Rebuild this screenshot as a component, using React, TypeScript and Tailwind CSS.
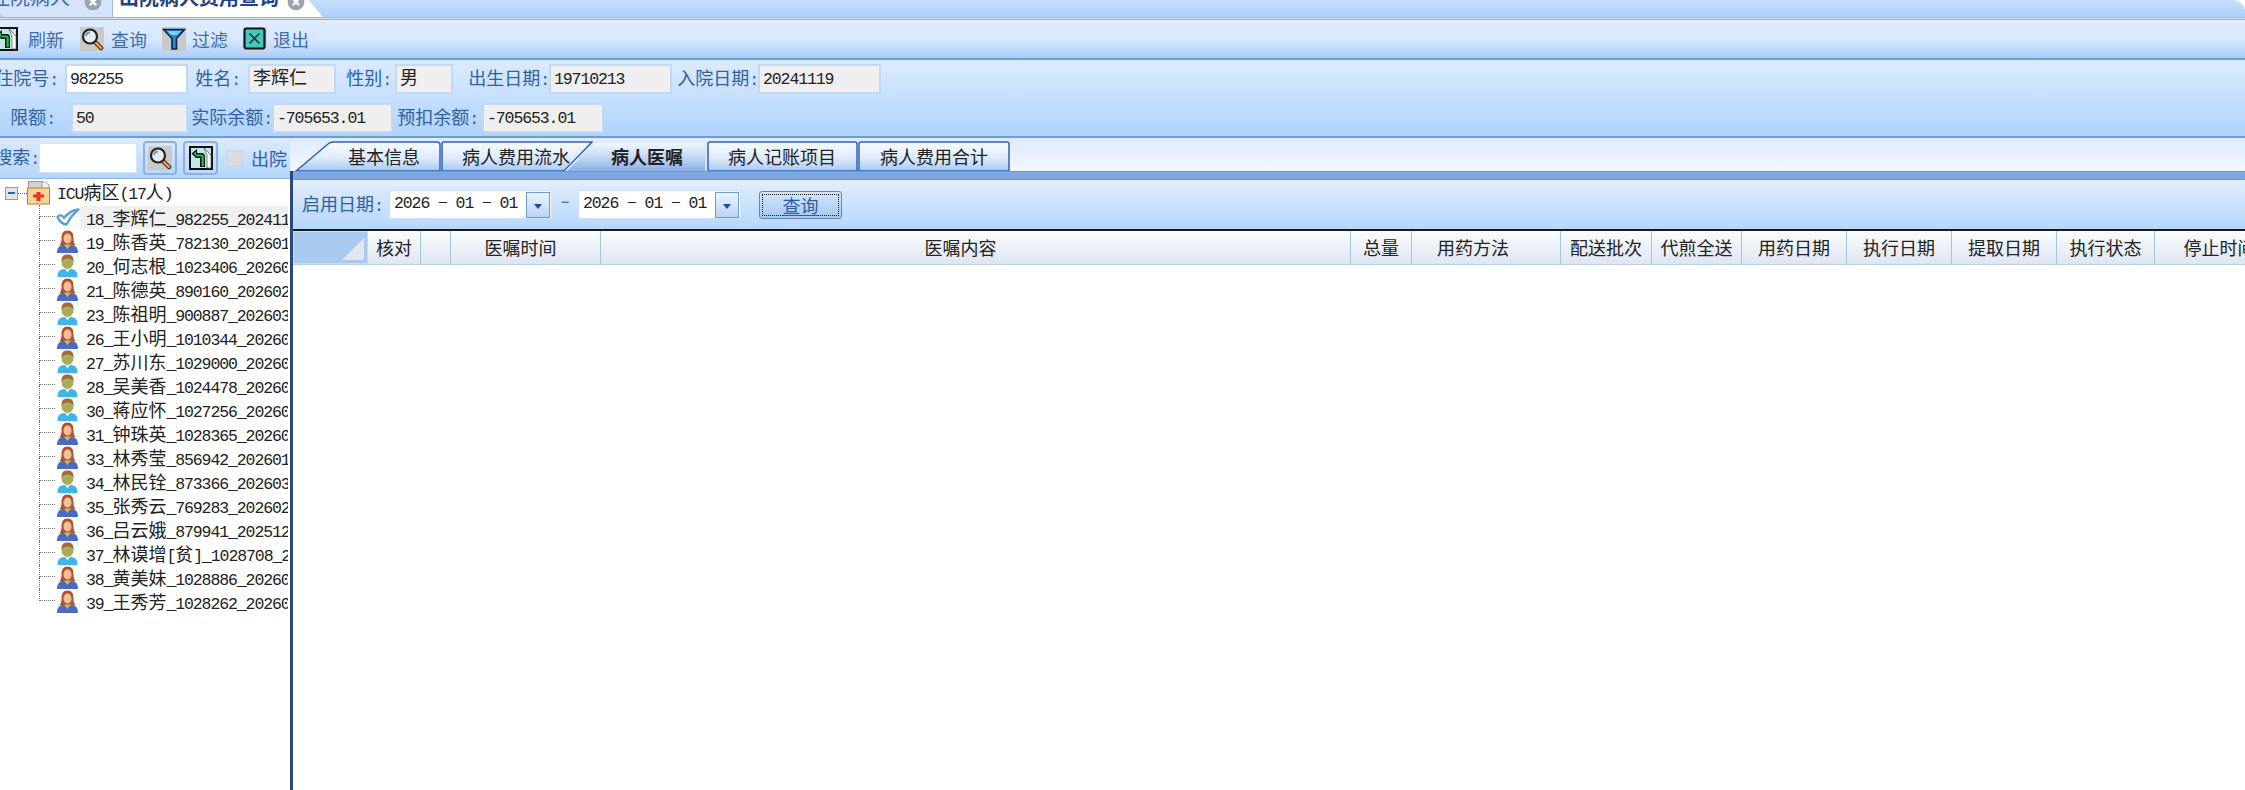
import React from 'react'

const CJK = "font-['Noto_Sans_CJK_SC','Liberation_Sans',sans-serif]"
const MONO = "font-['Liberation_Mono',monospace] text-[16.5px] tracking-[-1.1px]"

// digits and colons are narrow in the original, so they get their own mono run
const T = ({ text }: { text: string }) => {
    const parts = text.split(/([\u4e00-\u9fff]+)/)
    return (
        <>
            {parts.map((p, i) =>
                /[\u4e00-\u9fff]/.test(p)
                    ? <span key={i}>{p}</span>
                    : <span key={i} className={MONO}>{p}</span>
            )}
        </>
    )
}

const RefreshIcon = ({ size = 24 }: { size?: number }) => (
    <svg width={size} height={size} viewBox="0 0 24 24" className="shrink-0">
        <rect x="1" y="1" width="22" height="22" fill="#c4e4ea" stroke="#111" strokeWidth="2" />
        <path d="M15 2 L22 9 V22 H18 V9 Z" fill="#fff" stroke="#555" strokeWidth="0.7" />
        <path d="M11 21 V12 H7 L2.5 7.5 L8 3 V7 H13 Q16 7 16 11 V21 Z" fill="#111" />
        <path d="M12.5 20 V10.5 H7.5 L4.5 7.5 L7 5.5 V8.5 H13 Q14.8 8.5 14.8 11 V20 Z" fill="#19c24b" />
    </svg>
)

const SearchIcon = () => (
    <svg width="24" height="24" viewBox="0 0 24 24" className="shrink-0">
        <rect width="24" height="24" fill="#c9c9c9" />
        <path d="M14 14 L21 21" stroke="#4a2c10" strokeWidth="4.5" strokeLinecap="round" />
        <path d="M15 15 L21 21" stroke="#f0a048" strokeWidth="2.4" strokeLinecap="round" />
        <circle cx="10" cy="9.5" r="7" fill="#e4edf2" stroke="#222" strokeWidth="2.2" />
        <path d="M6 9 Q6.5 5.5 10 5.5" fill="none" stroke="#7f93a8" strokeWidth="2" />
    </svg>
)

const FilterIcon = () => (
    <svg width="24" height="24" viewBox="0 0 24 24" className="shrink-0">
        <rect width="24" height="24" fill="#c9c9c9" />
        <path d="M1.5 2.5 H22.5 L14.5 11.5 V22 H10 V11.5 Z" fill="#1f8fe0" stroke="#0b2344" strokeWidth="1.6" />
        <path d="M5 4 H19 L15 8 H9 Z" fill="#7fd0f7" />
    </svg>
)

const ExitIcon = () => (
    <svg width="24" height="24" viewBox="0 0 24 24" className="shrink-0">
        <rect width="24" height="24" fill="#d0d4d8" />
        <rect x="1.5" y="1.5" width="20" height="20" rx="2" fill="#46c8c0" stroke="#0c1a1c" strokeWidth="2.2" />
        <path d="M6.5 6.5 L16.5 16.5 M16.5 6.5 L6.5 16.5" stroke="#17393c" strokeWidth="1.6" />
    </svg>
)

const CloseDot = () => (
    <svg width="18" height="18" viewBox="0 0 14 14" className="shrink-0">
        <circle cx="7" cy="7" r="6.5" fill="#98a4b4" />
        <path d="M4.5 4.5 L9.5 9.5 M9.5 4.5 L4.5 9.5" stroke="#fff" strokeWidth="1.8" />
    </svg>
)

const Female = () => (
    <svg width="23" height="23" viewBox="0 0 23 23" className="shrink-0">
        <path d="M11.5 0.5 C6 0.5 5.5 5 5.5 9 C5.5 12 4.5 14 3.5 15 H19.5 C18.5 14 17.5 12 17.5 9 C17.5 5 17 0.5 11.5 0.5 Z" fill="#b5532f" />
        <path d="M1 23 C1 17 4 15 8 14.5 L15 14.5 C19 15 22 17 22 23 Z" fill="#4a6bc0" />
        <path d="M8 14.5 L11.5 19 L15 14.5 Z" fill="#e9b23c" />
        <ellipse cx="11.5" cy="8.5" rx="4" ry="5" fill="#f0c49a" />
    </svg>
)

const Male = () => (
    <svg width="23" height="23" viewBox="0 0 23 23" className="shrink-0">
        <path d="M1.5 23 C1.5 17 4 15.5 8 15 H15 C19 15.5 21.5 17 21.5 23 Z" fill="#3fb6e6" />
        <path d="M9 15 L11.5 18.5 L14 15 Z" fill="#eef6fa" />
        <ellipse cx="11.5" cy="8" rx="6" ry="7" fill="#a8ad5c" />
        <path d="M5.5 8 C5 2 8 0.5 11.5 0.5 C15 0.5 18 2 17.5 8 C16.5 5 14.5 4.5 11.5 4.5 C8.5 4.5 6.5 5 5.5 8 Z" fill="#a5683a" />
    </svg>
)

const Check = () => (
    <svg width="24" height="18" viewBox="0 0 24 18" className="shrink-0">
        <path d="M1.5 9 C3 6.5 6.5 7 8 10 C12 5 16 2 22.5 1.5 C18 5 14 10 10.5 16.5 C7 16.5 3 13 1.5 9 Z" fill="#fff" stroke="#5a9fd0" strokeWidth="2.4" strokeLinejoin="round" />
    </svg>
)

const Ward = () => (
    <svg width="23" height="24" viewBox="0 0 23 24" className="shrink-0">
        <rect x="1.5" y="0.5" width="14" height="8" fill="#cfd2d6" stroke="#9a9a9a" />
        <path d="M15 1 H19 L22 4 V8 H15 Z" fill="#eee" stroke="#aaa" />
        <rect x="0.5" y="7" width="22" height="16" fill="#fbd49a" stroke="#c07a30" />
        <path d="M9.5 11 H13.5 V13.5 H17 V16.5 H13.5 V20 H9.5 V16.5 H6 V13.5 H9.5 Z" fill="#e8351c" />
    </svg>
)

const patients: [string, 'f' | 'm' | 'c'][] = [
    ['18_李辉仁_982255_20241119', 'c'],
    ['19_陈香英_782130_20260101', 'f'],
    ['20_何志根_1023406_20260101', 'm'],
    ['21_陈德英_890160_20260201', 'f'],
    ['23_陈祖明_900887_20260301', 'm'],
    ['26_王小明_1010344_20260101', 'f'],
    ['27_苏川东_1029000_20260101', 'm'],
    ['28_吴美香_1024478_20260101', 'm'],
    ['30_蒋应怀_1027256_20260101', 'm'],
    ['31_钟珠英_1028365_20260101', 'f'],
    ['33_林秀莹_856942_20260101', 'f'],
    ['34_林民铨_873366_20260301', 'm'],
    ['35_张秀云_769283_20260201', 'f'],
    ['36_吕云娥_879941_20251201', 'f'],
    ['37_林谟增[贫]_1028708_20260101', 'm'],
    ['38_黄美妹_1028886_20260101', 'f'],
    ['39_王秀芳_1028262_20260101', 'f'],
]

// name, width, class that nudges the caption off centre as in the original
const columns: [string, number, string][] = [
    ['核对', 53, ''],
    ['', 30, ''],
    ['医嘱时间', 150, 'pr-[10px]'],
    ['医嘱内容', 750, 'pr-[30px]'],
    ['总量', 61, ''],
    ['用药方法', 149, 'pr-[26px]'],
    ['配送批次', 91, ''],
    ['代煎全送', 90, ''],
    ['用药日期', 105, ''],
    ['执行日期', 105, ''],
    ['提取日期', 105, ''],
    ['执行状态', 98, ''],
    ['停止时间', 130, ''],
]

const Field = ({ label, labelClass, boxW, value, white }: { label: string, labelClass: string, boxW: string, value: string, white?: boolean }) => (
    <>
        <div className={`${labelClass} shrink-0 flex justify-end items-center whitespace-nowrap overflow-hidden text-[#2f5fa5]`}>
            <span><T text={label} /></span>
        </div>
        <div className={`${boxW} shrink-0 h-[30px] pl-[3px] border-2 border-[#c3d8f3] leading-[20px] text-[#222] whitespace-nowrap ${white ? 'bg-white' : 'bg-[#efefef]'}`}>
            <T text={value} />
        </div>
    </>
)

const DateBox = () => (
    <div className="w-[163px] h-[29px] bg-white border border-[#cfe0f5] flex items-center justify-between pl-[4px] pr-[1px] shrink-0">
        <span className={`${MONO} text-[#222] whitespace-pre`}>2026 − 01 − 01</span>
        <div className="w-[24px] h-[26px] border border-[#6f9bd6] bg-linear-to-b from-[#eef5fe] to-[#b9d4f6] flex items-center justify-center">
            <div className="mt-[3px] border-x-[4px] border-x-transparent border-t-[5px] border-t-[#1f4f9c]" />
        </div>
    </div>
)

const TabShape = ({ d, fill, stroke = '#2b64b8' }: { d: string, fill: string, stroke?: string }) => (
    <svg className="absolute inset-0 w-full h-full" preserveAspectRatio="none">
        <path d={d} fill={fill} stroke={stroke} strokeWidth="1.5" />
    </svg>
)

const tabStops = (
    <defs>
        <linearGradient id="tabIdle" x1="0" x2="0" y1="0" y2="1">
            <stop offset="0" stopColor="#f7fbff" />
            <stop offset="0.55" stopColor="#dfebfc" />
            <stop offset="1" stopColor="#a9c8f2" />
        </linearGradient>
        <linearGradient id="tabActive" x1="0" x2="0" y1="0" y2="1">
            <stop offset="0" stopColor="#f4f9ff" />
            <stop offset="0.5" stopColor="#c4d9f6" />
            <stop offset="1" stopColor="#84ace3" />
        </linearGradient>
    </defs>
)

const App = () => {
    return (
        <div className={`w-[2245px] h-[790px] overflow-hidden bg-white flex flex-col text-[18px] ${CJK}`}>
            {/* top document tabs, cut off by the screenshot */}
            <div className="h-[17px] shrink-0 flex bg-linear-to-b from-[#c6dffd] to-[#aed0fb] rounded-tr-[12px] overflow-hidden text-[20px]">
                <div className="w-[113px] shrink-0 bg-[#d3e4fb] border-r border-[#9dbbe4] rounded-bl-[6px] flex items-center justify-end pr-[10px] gap-[14px] text-[#3d6aa8] whitespace-nowrap overflow-hidden">
                    <span className="-mt-[24px]">住院病人</span>
                    <div className="-mt-[13px]"><CloseDot /></div>
                </div>
                <div className="w-[210px] shrink-0 bg-white [clip-path:polygon(0_0,93%_0,100%_100%,0_100%)] flex items-center pl-[6px] gap-[8px] font-bold text-[#1d4384] whitespace-nowrap overflow-hidden">
                    <span className="-mt-[24px]">出院病人费用查询</span>
                    <div className="-mt-[13px]"><CloseDot /></div>
                </div>
            </div>
            <div className="h-[3px] shrink-0 bg-linear-to-b from-[#8d9ab0] via-[#dde2e8] to-[#8a9098]" />

            {/* toolbar */}
            <div className="h-[40px] shrink-0 flex items-center bg-linear-to-b from-[#dfecfe] via-[#d8e8fd] to-[#a9cdfb] text-[#3f6cb0] border-b-2 border-[#6d9cdb]">
                <div className="-ml-[6px] flex items-center"><RefreshIcon /></div>
                <span className="ml-[10px]">刷新</span>
                <div className="ml-[16px]"><SearchIcon /></div>
                <span className="ml-[7px]">查询</span>
                <div className="ml-[15px]"><FilterIcon /></div>
                <span className="ml-[6px]">过滤</span>
                <div className="ml-[15px]"><ExitIcon /></div>
                <span className="ml-[6px]">退出</span>
            </div>

            {/* patient info */}
            <div className="h-[78px] shrink-0 pt-[4px] flex flex-col gap-[9px] bg-linear-to-b from-[#dcebfe] to-[#aed3fc] border-b-2 border-[#6d9cdb]">
                <div className="flex h-[30px]">
                    <Field label="住院号:" labelClass="w-[65px] pr-[7px]" boxW="w-[123px]" value="982255" white />
                    <Field label="姓名:" labelClass="w-[60px] pr-[8px]" boxW="w-[88px]" value="李辉仁" />
                    <Field label="性别:" labelClass="w-[59px] pr-[4px]" boxW="w-[58px]" value="男" />
                    <Field label="出生日期:" labelClass="w-[96px]" boxW="w-[123px]" value="19710213" />
                    <Field label="入院日期:" labelClass="w-[86px]" boxW="w-[123px]" value="20241119" />
                </div>
                <div className="flex h-[30px]">
                    <Field label="限额:" labelClass="w-[71px] pr-[16px]" boxW="w-[117px]" value="50" />
                    <Field label="实际余额:" labelClass="w-[84px]" boxW="w-[121px]" value="-705653.01" />
                    <Field label="预扣余额:" labelClass="w-[89px] pr-[4px]" boxW="w-[122px]" value="-705653.01" />
                </div>
            </div>

            <div className="flex-1 flex min-h-0">
                {/* left: patient tree */}
                <div className="w-[290px] shrink-0 flex flex-col">
                    <div className="h-[41px] shrink-0 flex items-center bg-linear-to-b from-[#dcebfe] to-[#b4d5fc] border-b border-[#8fb2e0] text-[#2f5fa5]">
                        <div className="w-[39px] shrink-0 flex justify-end overflow-hidden whitespace-nowrap"><span><T text="搜索:" /></span></div>
                        <div className="w-[98px] h-[30px] shrink-0 bg-white border border-[#d5e3f6]" />
                        <div className="ml-[6px] w-[34px] h-[34px] shrink-0 rounded-[4px] border-2 border-[#8fb0dc] flex items-center justify-center"><SearchIcon /></div>
                        <div className="ml-[6px] w-[35px] h-[34px] shrink-0 rounded-[4px] border-2 border-[#8fb0dc] flex items-center justify-center"><RefreshIcon /></div>
                        <div className="ml-[8px] w-[17px] h-[17px] shrink-0 bg-[#dcdcdc] border-2 border-[#c6d9f2]" />
                        <span className="ml-[8px] whitespace-nowrap">出院</span>
                    </div>
                    <div className="flex-1 pt-[2px] pr-[2px] bg-white text-[#222] overflow-hidden">
                        <div className="h-[24px] flex items-center">
                            <div className="ml-[5px] w-[13px] h-[13px] bg-[#e4e4e4] border border-[#999] flex items-center justify-center shrink-0">
                                <div className="w-[7px] h-[1.5px] bg-[#2f5fa5]" />
                            </div>
                            <div className="w-[9px] border-t border-dotted border-[#777]" />
                            <Ward />
                            <span className="ml-[7px] whitespace-nowrap"><T text="ICU" /><span>病区</span><T text="(17" /><span>人</span><T text=")" /></span>
                        </div>
                        {patients.map(([label, kind], i) => (
                            <div key={label} className="h-[24px] flex items-center">
                                <div className="ml-[39px] w-[16px] h-full shrink-0 flex flex-col">
                                    <div className="h-1/2 border-l border-b border-dotted border-[#777]" />
                                    <div className={`h-1/2 ${i < patients.length - 1 ? 'border-l border-dotted border-[#777]' : ''}`} />
                                </div>
                                <div className="w-[25px] shrink-0 flex justify-center">
                                    {kind === 'c' ? <Check /> : kind === 'f' ? <Female /> : <Male />}
                                </div>
                                <div className={`flex-1 min-w-0 pl-[6px] h-[23px] leading-[23px] overflow-hidden whitespace-nowrap ${kind === 'c' ? 'bg-[#f0f0f0]' : ''}`}>
                                    <T text={label} />
                                </div>
                            </div>
                        ))}
                    </div>
                </div>

                {/* right: tabs and orders grid */}
                <div className="flex-1 min-w-0 flex flex-col">
                    <div className="h-[33px] shrink-0 pt-[3px] pl-[3px] flex items-end bg-linear-to-b from-[#dcebfe] to-[#f3f8fe] text-[#222] whitespace-nowrap">
                        <svg width="0" height="0" className="absolute">{tabStops}</svg>
                        <div className="relative w-[148px] h-[30px] shrink-0 flex items-center pl-[55px]">
                            <TabShape d="M3 30 L35 3 Q37 1 40 1 H144 Q147 1 147 4 V30 Z" fill="url(#tabIdle)" />
                            <span className="relative">基本信息</span>
                        </div>
                        <div className="relative w-[152px] h-[30px] shrink-0 flex items-center pl-[21px]">
                            <TabShape d="M1 30 V3 Q1 1 3 1 H151 L124 29 L122 30 Z" fill="url(#tabIdle)" />
                            <span className="relative">病人费用流水</span>
                        </div>
                        <div className="relative z-10 w-[142px] h-[30px] shrink-0 -ml-[28px] flex items-center pl-[46px]">
                            <TabShape d="M0 31 L29 2 Q30 1 33 1 H140 Q141 1 141 3 V31" fill="url(#tabActive)" stroke="#d9e8fb" />
                            <span className="relative font-bold">病人医嘱</span>
                        </div>
                        <div className="relative w-[151px] h-[30px] shrink-0 flex items-center pl-[21px]">
                            <TabShape d="M1 30 V3 Q1 1 3 1 H148 Q150 1 150 3 V30 Z" fill="url(#tabIdle)" />
                            <span className="relative">病人记账项目</span>
                        </div>
                        <div className="relative w-[152px] h-[30px] shrink-0 flex items-center pl-[22px]">
                            <TabShape d="M1 30 V3 Q1 1 3 1 H149 Q151 1 151 3 V30 Z" fill="url(#tabIdle)" />
                            <span className="relative">病人费用合计</span>
                        </div>
                    </div>

                    <div className="flex-1 min-h-0 flex flex-col border-l-[3px] border-[#2c4a78]">
                        <div className="h-[9px] shrink-0 bg-[#7ea8e2] border-y border-[#6d95d0]" />
                        <div className="h-[49px] shrink-0 flex items-center pl-[9px] bg-linear-to-b from-[#e2eefe] to-[#b6d6fc] text-[#2f5fa5]">
                            <span className="w-[80px] shrink-0 whitespace-nowrap"><T text="启用日期:" /></span>
                            <div className="ml-[7px]"><DateBox /></div>
                            <span className="w-[26px] text-center font-['Liberation_Mono',monospace] text-[15px]">−</span>
                            <DateBox />
                            <div className="ml-[18px] w-[83px] h-[28px] shrink-0 rounded-[3px] border border-[#5f86bd] bg-linear-to-b from-[#d3e5fb] to-[#a9c8ef] p-[2px]">
                                <div className="h-full border border-dotted border-[#111] flex items-center justify-center text-[#2c5da6] underline decoration-1 underline-offset-2 leading-none">查询</div>
                            </div>
                        </div>
                        <div className="h-[36px] shrink-0 flex border-t-2 border-[#1a1a1a] border-b border-b-[#b9cfe2] bg-linear-to-b from-[#fbfdff] to-[#dde5f0] text-[#222] whitespace-nowrap">
                            <div className="w-[75px] shrink-0 bg-[#a9c9ef] border border-[#c6dbf5] flex justify-end items-end pr-[3px] pb-[3px]">
                                <svg width="22" height="22" viewBox="0 0 22 22">
                                    <path d="M22 0 V22 H0 Z" fill="#e2e7ee" />
                                </svg>
                            </div>
                            {columns.map(([name, w, nudge], i) => (
                                <div key={i} style={{ width: w }} className={`shrink-0 flex items-center justify-center border-r border-[#a9c3dc] ${nudge}`}>{name}</div>
                            ))}
                        </div>
                        <div className="flex-1 bg-white" />
                    </div>
                </div>
            </div>
        </div>
    )
}

export default App
